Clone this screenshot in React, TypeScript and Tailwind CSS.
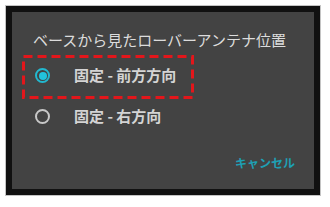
export default function App() {
  const font = { fontFamily: '"Noto Sans CJK JP", "Noto Sans", sans-serif' };
  return (
    <div className="w-[330px] h-[207px] bg-white pt-[5px] pl-[5px]" style={font}>
      <div className="w-[316px] h-[191px] border border-[#c4c4c4] bg-[#111111] p-[6px]">
        <div className="relative h-full bg-[#434343] flex flex-col">
          <div className="pt-[18px] pl-[21px] h-[38px] text-[15px] leading-[20px] text-[#dcdcdc]">
            ベースから見たローバーアンテナ位置
          </div>

          <div className="mt-[5px] h-[41px] flex items-center pl-[23px]">
            <span className="w-[15px] h-[15px] rounded-full border-2 border-[#22b8cf] flex items-center justify-center">
              <span className="w-[8px] h-[8px] rounded-full bg-[#22c3dc]" />
            </span>
            <span className="ml-[24px] text-[15px] font-bold text-[#d4d4d4]">固定 - 前方方向</span>
          </div>

          <div className="h-[41px] flex items-center pl-[23px]">
            <span className="w-[15px] h-[15px] rounded-full border-2 border-[#c8c8c8]" />
            <span className="ml-[24px] text-[15px] font-bold text-[#d4d4d4]">固定 - 右方向</span>
          </div>

          <div className="mt-[17px] flex justify-end pr-[19px]">
            <span className="text-[12px] leading-[18px] font-bold text-[#1e9fb3]">キャンセル</span>
          </div>

          <svg className="absolute left-[10px] top-[43px]" width="172" height="44" viewBox="0 0 172 44">
            <rect x="1.5" y="1.5" width="169" height="41" fill="none" stroke="#e3161b" strokeWidth="3" strokeDasharray="9 5" />
          </svg>
        </div>
      </div>
    </div>
  );
}
